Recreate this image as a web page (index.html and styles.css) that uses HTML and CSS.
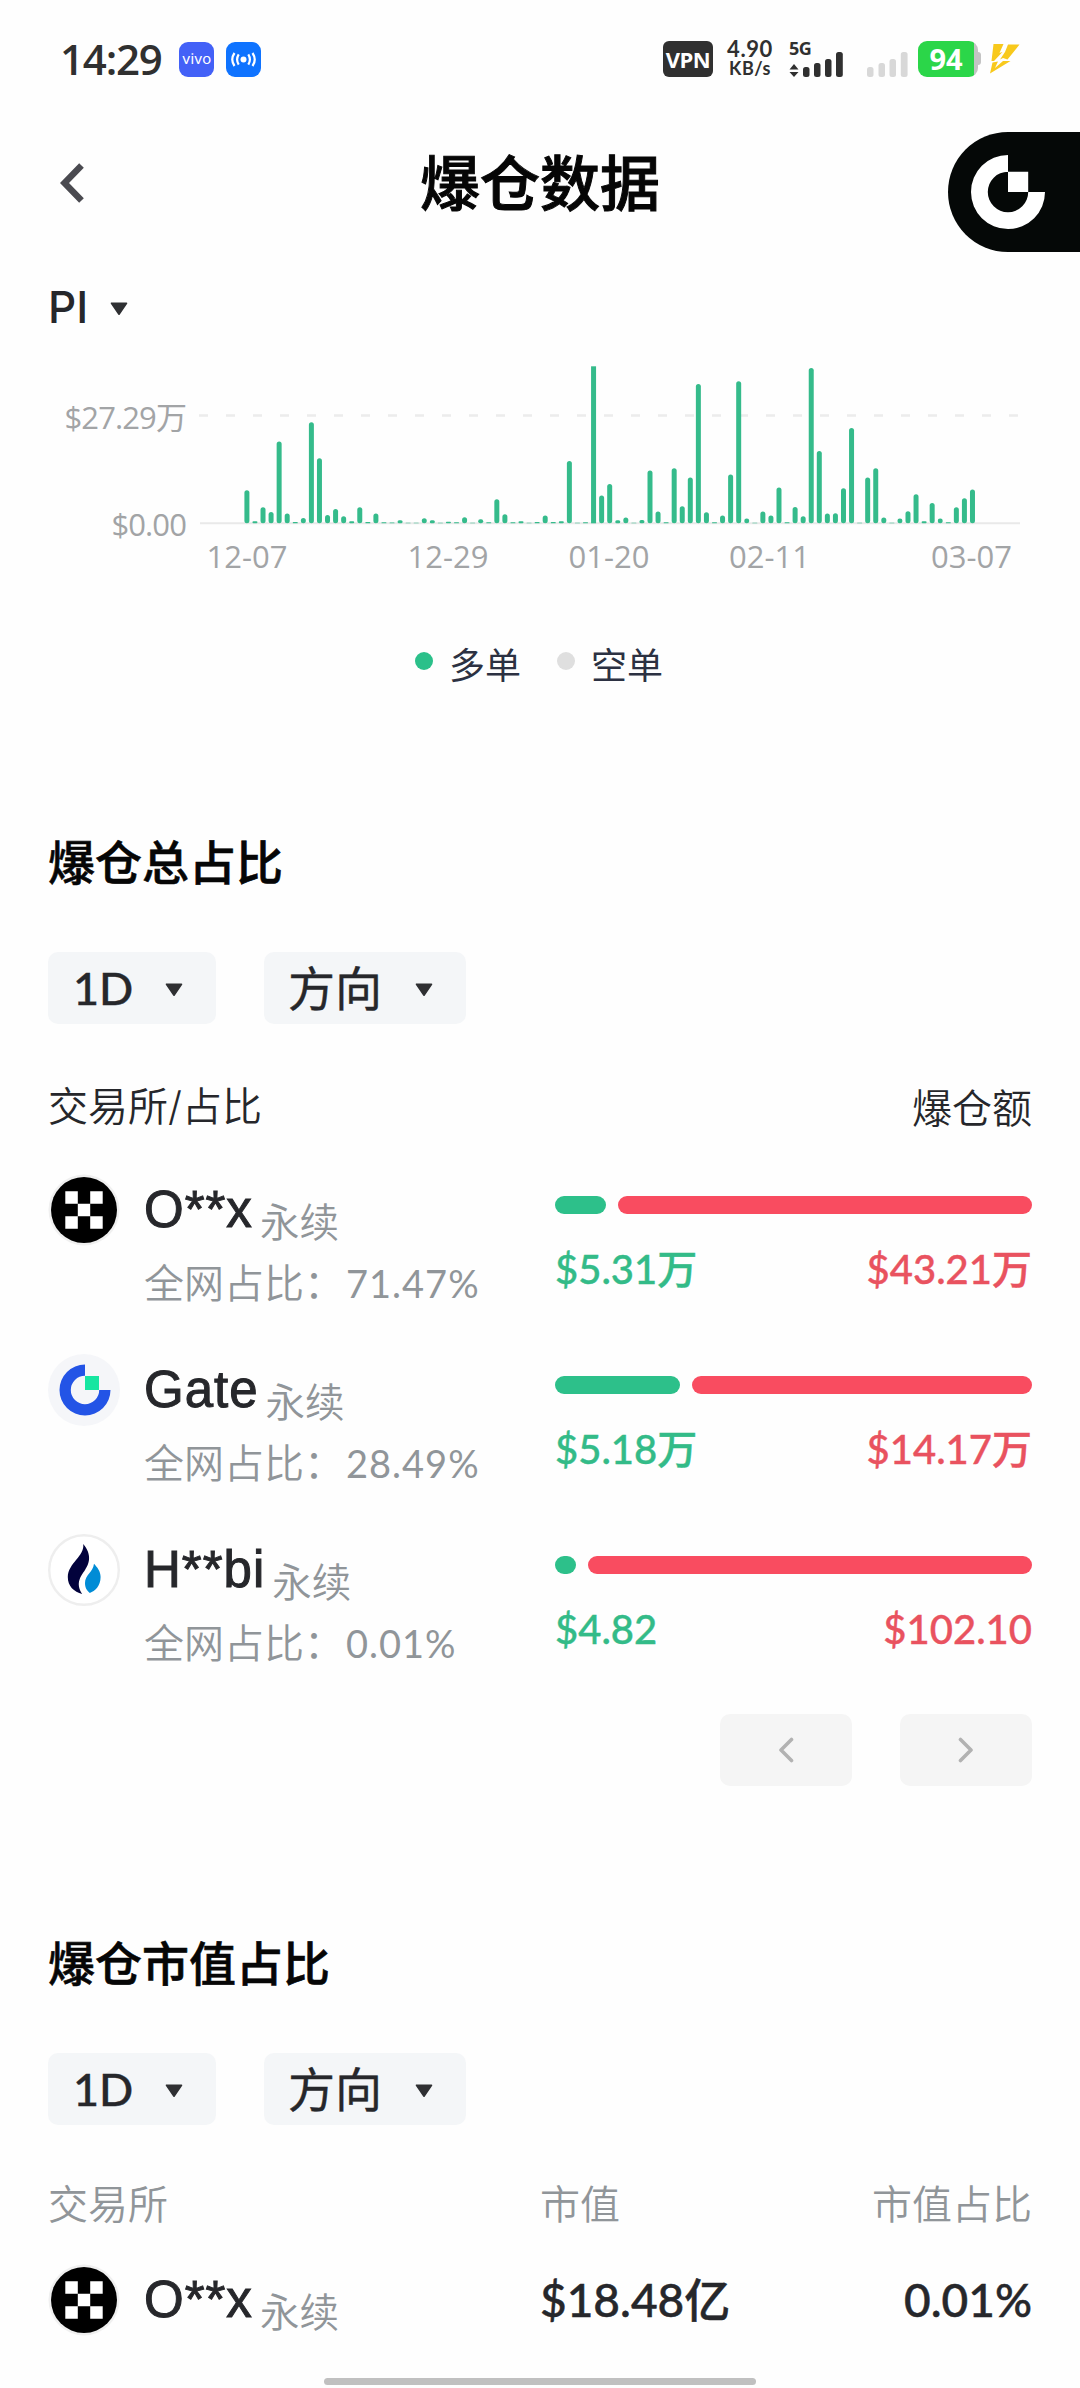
FILE: index.html
```html
<!DOCTYPE html>
<html lang="zh-CN">
<head>
<meta charset="utf-8">
<title>爆仓数据</title>
<link rel="stylesheet" href="styles.css">
</head>
<body>
<svg class="defs" aria-hidden="true">
  <symbol id="logo-okx" viewBox="0 0 72 72">
    <circle cx="36" cy="36" r="35.5" fill="#f0f0f0"/>
    <circle cx="36" cy="36" r="33" fill="#000"/>
    <path d="M17.3 17.3h12.5v12.5h-12.5zM42.2 17.3h12.5v12.5h-12.5zM29.8 29.8h12.4v12.4h-12.4zM17.3 42.2h12.5v12.5h-12.5zM42.2 42.2h12.5v12.5h-12.5z" fill="#fff"/>
  </symbol>
  <symbol id="logo-gate" viewBox="0 0 72 72">
    <circle cx="36" cy="36" r="36" fill="#f5f6f9"/>
    <path d="M37 10.5A25.5 25.5 0 1 0 62.5 36H51.2A14.2 14.2 0 1 1 37 21.8Z" fill="#2354e6"/>
    <path d="M37 22h14v14H37z" fill="#17e6a1"/>
  </symbol>
  <symbol id="logo-huobi" viewBox="0 0 72 72">
    <circle cx="36" cy="36" r="34.8" fill="#fff" stroke="#eeeeee" stroke-width="2.4"/>
    <path d="M35.2 10C37 22 20 29 19.8 43C19.7 52 26 58 34.2 60C27 49 33 42 37 36C41 30 44.500 21 35.2 10Z" fill="#02023c"/>
    <path d="M46 29.700C45 38 37 41 37 49C37 54 39 56.500 41.800 59C47 57 52.600 52 52.600 43C52.600 37 49 33 46 29.700Z" fill="#008cd6"/>
  </symbol>
  <symbol id="caret" viewBox="0 0 18 14">
    <path d="M1.500 1.200H16.500L9 12.200Z" fill="#2f3033" stroke="#2f3033" stroke-width="1.600" stroke-linejoin="round"/>
  </symbol>
</svg>

<header class="status">
  <span class="status-time">14:29</span>
  <span class="app app-vivo"><span class="app-word">vivo</span></span>
  <svg class="app-cast" viewBox="0 0 35 35">
    <rect width="35" height="35" rx="9" fill="#0f73ff"/>
    <circle cx="17.500" cy="17.500" r="3" fill="#fff"/>
    <path d="M12.700 12.300Q9.500 17.500 12.700 22.700M22.300 12.300Q25.500 17.500 22.300 22.700M8.500 11Q4 17.500 8.500 24M26.500 11Q31 17.500 26.500 24" fill="none" stroke="#fff" stroke-width="2.200"/>
  </svg>
  <span class="vpn">VPN</span>
  <span class="speed"><span class="speed-value">4.90</span><span class="speed-unit">KB/s</span></span>
  <span class="cell">
    <span class="cell-type">5G</span>
    <svg class="cell-bars" viewBox="0 0 54 25">
      <path d="M5 12L9.500 17.500H.5L5 12ZM5 25L9.500 20H.5Z" fill="#303030"/>
      <g fill="#303030"><rect x="14" y="15" width="6.500" height="10" rx="2.500"/><rect x="25" y="11" width="6.500" height="14" rx="2.500"/><rect x="36" y="7" width="6.500" height="18" rx="2.500"/><rect x="47" y="0" width="6.800" height="25" rx="2.500"/></g>
    </svg>
  </span>
  <svg class="cell-empty" viewBox="0 0 41 25">
    <g fill="#d8d8d8"><rect x="0" y="15" width="6.500" height="10" rx="2.500"/><rect x="11.500" y="11" width="6.500" height="14" rx="2.500"/><rect x="22.500" y="7" width="6.500" height="18" rx="2.500"/><rect x="33.800" y="0" width="6.800" height="25" rx="2.500"/></g>
  </svg>
  <span class="battery"><span class="battery-level">94</span></span>
  <svg class="bolt" viewBox="0 0 30 30">
    <path d="M3.500 0H13.500L9.500 9L12.500 8L4 17H1.500ZM18 .5H29.500L17.500 15.500L13 14L10 15.500L15 8ZM2.500 18.500L8 17.500L5 24L13 17H20.500L0 29.500Z" fill="#f8c91c"/>
  </svg>
</header>

<nav class="topbar">
  <svg class="back" viewBox="0 0 24 40"><path d="M21.500 2.500L4.500 20L21.500 37.500" fill="none" stroke="#4a4a50" stroke-width="6.500"/></svg>
  <h1 class="title">爆仓数据</h1>
</nav>
<div class="float-btn">
  <svg viewBox="0 0 74 74"><path d="M37 0A37 37 0 1 0 74 37H57.200A20.200 20.200 0 1 1 37 16.800ZM37 16.800H57.200V37H37Z" fill="#fff"/></svg>
</div>

<main class="content">
  <div class="coin"><span class="coin-name">PI</span><svg class="caret"><use href="#caret"/></svg></div>

  <svg class="chart" viewBox="0 0 984 250">
    <line x1="151" x2="972" y1="78.500" y2="78.500" stroke="#ececec" stroke-width="2.500" stroke-dasharray="9 18"/>
    <line x1="152" x2="972" y1="186.300" y2="186.300" stroke="#e9e9e9" stroke-width="2"/>
    <g id="bars" fill="#35bb8b"></g>
    <g class="axis axis-y" text-anchor="end">
      <text x="138" y="92">$27.29万</text>
      <text x="138" y="199">$0.00</text>
    </g>
    <g class="axis" text-anchor="middle">
      <text x="199" y="231">12-07</text>
      <text x="400" y="231">12-29</text>
      <text x="561" y="231">01-20</text>
      <text x="721.500" y="231">02-11</text>
      <text x="923.500" y="231">03-07</text>
    </g>
  </svg>

  <div class="legend">
    <i class="dot dot-long"></i><span>多单</span>
    <i class="dot dot-short"></i><span>空单</span>
  </div>

  <section class="share">
    <h2 class="heading">爆仓总占比</h2>
    <div class="filters">
      <button class="chip chip-period">1D<svg class="caret"><use href="#caret"/></svg></button>
      <button class="chip chip-side">方向<svg class="caret"><use href="#caret"/></svg></button>
    </div>
    <div class="share-head"><span>交易所/占比</span><span class="share-amount">爆仓额</span></div>

    <div class="row">
      <svg class="logo"><use href="#logo-okx"/></svg>
      <div class="who">
        <div class="name">O**x<small>永续</small></div>
        <div class="pct">全网占比：<b>71.47%</b></div>
      </div>
      <div class="split">
        <div class="split-bar"><i class="long" style="width:51px"></i><i class="short"></i></div>
        <div class="split-val"><span class="up">$5.31万</span><span class="down">$43.21万</span></div>
      </div>
    </div>
    <div class="row">
      <svg class="logo"><use href="#logo-gate"/></svg>
      <div class="who">
        <div class="name">Gate<small>永续</small></div>
        <div class="pct">全网占比：<b>28.49%</b></div>
      </div>
      <div class="split">
        <div class="split-bar"><i class="long" style="width:124.500px"></i><i class="short"></i></div>
        <div class="split-val"><span class="up">$5.18万</span><span class="down">$14.17万</span></div>
      </div>
    </div>
    <div class="row">
      <svg class="logo"><use href="#logo-huobi"/></svg>
      <div class="who">
        <div class="name">H**bi<small>永续</small></div>
        <div class="pct">全网占比：<b>0.01%</b></div>
      </div>
      <div class="split">
        <div class="split-bar"><i class="long" style="width:21px"></i><i class="short"></i></div>
        <div class="split-val"><span class="up">$4.82</span><span class="down">$102.10</span></div>
      </div>
    </div>

    <div class="pager">
      <button class="page-btn"><svg viewBox="0 0 16 26"><path d="M13.500 2.500L3 13L13.500 23.500" /></svg></button>
      <button class="page-btn"><svg viewBox="0 0 16 26"><path d="M2.500 2.500L13 13L2.500 23.500" /></svg></button>
    </div>
  </section>

  <section class="cap">
    <h2 class="heading">爆仓市值占比</h2>
    <div class="filters">
      <button class="chip chip-period">1D<svg class="caret"><use href="#caret"/></svg></button>
      <button class="chip chip-side">方向<svg class="caret"><use href="#caret"/></svg></button>
    </div>
    <div class="cap-grid cap-head"><span>交易所</span><span>市值</span><span class="end">市值占比</span></div>
    <div class="cap-grid cap-row">
      <div class="cap-who">
        <svg class="logo"><use href="#logo-okx"/></svg>
        <div class="name">O**x<small>永续</small></div>
      </div>
      <span class="cap-val">$18.48亿</span>
      <span class="cap-val end">0.01%</span>
    </div>
  </section>
</main>
<div class="home-bar"></div>
<script src="chart.js"></script>
</body>
</html>
```
FILE: styles.css
```css
* { box-sizing: border-box; margin: 0; padding: 0; }

body {
  position: relative;
  width: 1080px;
  height: 2388px;
  overflow: hidden;
  background: #fefefe;
  color: #26272b;
  font-family: Inter, "Noto Sans CJK SC", sans-serif;
}

button { border: 0; font: inherit; color: inherit; }
i, b { font-style: normal; font-weight: inherit; }
.defs { position: absolute; width: 0; height: 0; }

/* status bar */
.status {
  display: flex;
  align-items: center;
  height: 118px;
  padding-left: 60px;
  color: #303030;
  font-family: "Open Sans", sans-serif;
}
.status-time { width: 119px; font-size: 42px; font-weight: 600; letter-spacing: -1.2px; line-height: 42px; }
.app {
  display: flex; justify-content: center;
  width: 35px; height: 35px; border-radius: 9px;
  background: #4361f7; color: #fff;
}
.app-word { font: 400 13px/34px Inter, sans-serif; transform: scaleX(1.15); }
.app-cast { width: 35px; height: 35px; margin-left: 12px; }
.vpn {
  width: 50px; height: 36px; margin-left: 402px; border-radius: 6px;
  background: #303030; color: #fff;
  font-size: 22px; font-weight: 700; line-height: 36px; text-align: center; letter-spacing: -0.5px;
}
.speed { display: flex; flex-direction: column; align-items: center; width: 48px; margin-left: 13px; font-family: Lato, sans-serif; font-weight: 700; }
.speed-value { margin-bottom: 2px; font-size: 22px; line-height: 17px; letter-spacing: 0.6px; }
.speed-unit { font-size: 18px; line-height: 19px; letter-spacing: 0.5px; }
.cell { display: flex; flex-direction: column; width: 54px; height: 36px; margin-left: 15px; }
.cell-type { height: 11px; font-size: 18px; font-weight: 700; line-height: 14px; letter-spacing: -0.5px; }
.cell-bars { width: 54px; height: 25px; }
.cell-empty { width: 41px; height: 25px; margin: 11px 0 0 24px; }
.battery {
  position: relative; width: 60px; height: 36px; margin-left: 10px;
  border-radius: 9px; background: linear-gradient(90deg, #2bd649 56px, #c4c4c4 56px);
}
.battery::after {
  content: ""; position: absolute; left: 60px; top: 11px;
  width: 3px; height: 13px; border-radius: 0 3px 3px 0; background: #c4c4c4;
}
.battery-level { display: block; width: 56px; color: #fff; font: 700 29px/36px "Open Sans", sans-serif; text-align: center; }
.bolt { width: 30px; height: 30px; margin-left: 12px; }

/* title bar */
.topbar { display: grid; grid-template-columns: 60px 1fr 60px; align-items: center; height: 130px; }
.back { width: 24px; height: 40px; margin-left: 60px; }
.title { padding-top: 2px; color: #060606; font-size: 60px; font-weight: 500; line-height: 80px; text-align: center; -webkit-text-stroke: 1px #060606; }
.float-btn {
  position: absolute; top: 132px; right: 0;
  width: 132px; height: 120px; padding: 23px 0 0 23px;
  border-radius: 60px 0 0 60px; background: #050807;
}
.float-btn svg { width: 74px; height: 74px; }

.content { padding: 0 48px; }
.caret { width: 18px; height: 14px; }
.coin { display: flex; align-items: center; gap: 22px; height: 60px; margin-top: 29px; }
.coin-name { font-size: 44px; font-weight: 500; }
.coin .caret { margin-top: 3px; }

.chart { display: block; width: 984px; height: 250px; }
.axis { fill: #a2a4a6; font-family: "Open Sans", "Noto Sans CJK SC", sans-serif; font-size: 31px; font-weight: 400; }
.axis-y { letter-spacing: -0.9px; }

.legend { display: flex; align-items: center; justify-content: center; height: 60px; margin-top: 46px; padding-right: 2px; font-size: 36px; color: #2c3142; }
.dot { width: 18px; height: 18px; margin: -5px 16px 0 0; border-radius: 50%; }
.dot-long { background: #2bc08a; }
.dot-short { margin-left: 36px; background: #dfdfdf; }

/* sections */
.heading { height: 60px; color: #060606; font-size: 47px; font-weight: 500; line-height: 60px; -webkit-text-stroke: 0.6px #060606; }
.share { margin-top: 140px; }
.cap { margin-top: 148px; }
.filters { display: flex; gap: 48px; margin-top: 59px; }
.chip {
  display: flex; align-items: center; justify-content: space-between;
  height: 72px; padding: 0 33px 0 27px; border-radius: 10px; background: #f4f6f8;
  font-size: 44px; line-height: 72px;
}
.chip .caret { margin-top: 4px; }
.chip-period { width: 168px; padding-left: 25px; font-family: Lato, sans-serif; font-size: 45px; font-weight: 500; -webkit-text-stroke: 0.4px #26272b; }
.chip-side { width: 202px; padding-left: 24px; font-size: 47px; line-height: 75px; -webkit-text-stroke: 0.4px #26272b; }

.share-head { display: flex; justify-content: space-between; height: 61px; margin-top: 53px; font-size: 40px; line-height: 60px; font-weight: 350; }
.share-amount { padding-top: 2px; }

.row { display: flex; height: 180px; padding-top: 36px; }
.logo { flex: none; width: 72px; height: 72px; }
.who { width: 411px; margin-left: 24px; }
.name { height: 72px; font: 400 51px/72px "Liberation Sans", "Noto Sans CJK SC", sans-serif; letter-spacing: 1px; white-space: nowrap; -webkit-text-stroke: 1px #26272b; }
.name small {
  position: relative; top: 10px; margin-left: 7px; color: #909599;
  font: 350 39.5px/60px "Noto Sans CJK SC", sans-serif; letter-spacing: 0; -webkit-text-stroke: 0;
}
.pct { height: 60px; margin-top: 7px; color: #909599; font-size: 40px; font-weight: 350; line-height: 60px; white-space: nowrap; }
.pct b { margin-left: 2px; font-family: Lato, sans-serif; font-size: 38px; font-weight: 400; letter-spacing: 1px; }
.split { width: 477px; }
.split-bar { display: flex; gap: 12px; height: 18px; margin-top: 22px; }
.split-bar i { border-radius: 9px; }
.long { background: #2dc08a; }
.short { flex: 1; background: #f94c60; }
.split-val { display: flex; justify-content: space-between; height: 60px; margin-top: 25px; font: 500 40px/60px Lato, "Noto Sans CJK SC", sans-serif; }
.up { color: #33bb88; -webkit-text-stroke: 0.4px #33bb88; }
.down { color: #e9525f; -webkit-text-stroke: 0.4px #e9525f; }

.pager { display: flex; justify-content: flex-end; gap: 48px; margin-top: 36px; }
.page-btn { display: flex; align-items: center; justify-content: center; width: 132px; height: 72px; border-radius: 10px; background: #f5f5f5; }
.page-btn svg { width: 16px; height: 26px; fill: none; stroke: #b2b2b2; stroke-width: 3.600; stroke-linecap: round; stroke-linejoin: round; }

.cap-grid { display: grid; grid-template-columns: 492px 1fr auto; align-items: center; }
.cap-head { height: 60px; margin-top: 47px; color: #909599; font-size: 40px; font-weight: 350; }
.cap-row { height: 72px; margin-top: 31px; }
.cap-who { display: flex; gap: 24px; }
.cap-val { padding-top: 1px; font: 500 46px/72px Lato, "Noto Sans CJK SC", sans-serif; -webkit-text-stroke: 0.5px #26272b; }

.home-bar { position: absolute; left: 324px; top: 2378px; width: 432px; height: 7px; border-radius: 4px; background: #c0c0c0; }
```
FILE: chart.js
```js
// Daily liquidation heights in pixels, 12-07 to 03-07
const heights = [
  33, 2, 16, 11.3, 81.7, 9.7, 1.3, 5.3, 101, 65, 8.3, 14.3, 7, 2, 16, 1.3, 9.7, 1, .7, 3,
  .5, .5, 5, 3, .5, 1.5, 1, 6, .5, 4, 1, 24, 9, 1, 2, .5, 1.3, 7.7, 1.3, 2,
  62.3, .5, 1, 157, 27.7, 39.3, 3, 5.7, .5, 3.3, 52.7, 11.7, 1, 55, 17, 45.7, 139.3, 11, 1, 7.7,
  48.7, 142, 4.7, .5, 11.7, 7.7, 35.7, 1, 16.3, 7, 155.3, 72.3, 9.7, 10, 35, 95.3, .5, 45.7, 55, 5.7,
  .5, 4.7, 12, 29, 2, 20.3, 4.7, 1, 16, 25, 33.7
];
const group = document.getElementById("bars");
heights.forEach((h, i) => {
  const r = document.createElementNS("http://www.w3.org/2000/svg", "rect");
  r.setAttribute("x", 196.4 + i * 8.062);
  r.setAttribute("y", 186.3 - h);
  r.setAttribute("width", 5);
  r.setAttribute("height", h);
  r.setAttribute("rx", h > 156 ? 0 : Math.min(2.5, h / 2));
  group.appendChild(r);
});
```
